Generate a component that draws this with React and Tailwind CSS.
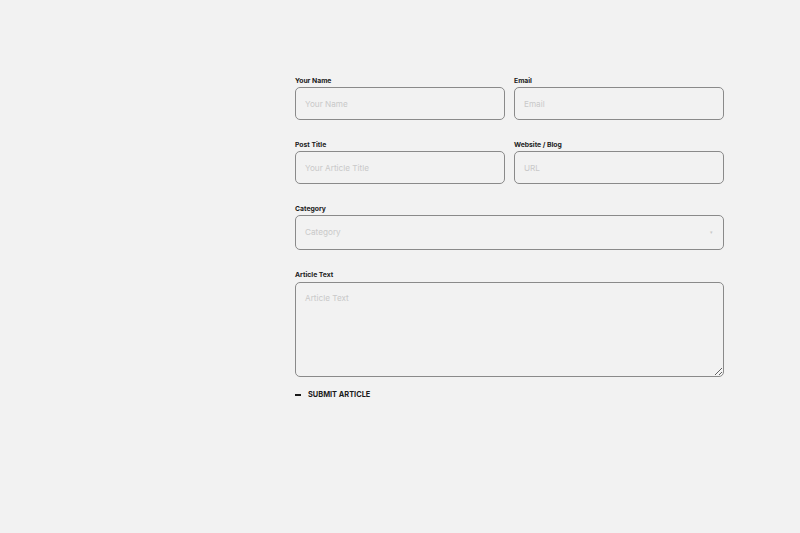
import React from "react";

const font = { fontFamily: "Inter, 'Liberation Sans', sans-serif" };

function Field({ label, placeholder, className = "" }) {
  return (
    <div className={"flex flex-col " + className}>
      <label className="text-[6.8px] leading-[11px] font-bold text-[#1a1a1a] mb-[1px]">{label}</label>
      <input
        placeholder={placeholder}
        className="h-[33px] w-full rounded-[5px] border-[1.5px] border-[#8a8a8a] bg-transparent px-[9px] text-[8.2px] text-[#333] placeholder:text-[#c9c9c9] outline-none"
      />
    </div>
  );
}

export default function App() {
  return (
    <div className="min-h-[533px] w-full bg-[#f2f2f2]" style={font}>
      <div className="ml-[295px] w-[429px] pt-[75px] flex flex-col">
        <div className="grid grid-cols-2 gap-x-[9px]">
          <Field label="Your Name" placeholder="Your Name" />
          <Field label="Email" placeholder="Email" />
        </div>
        <div className="grid grid-cols-2 gap-x-[9px] mt-[19px]">
          <Field label="Post Title" placeholder="Your Article Title" />
          <Field label="Website / Blog" placeholder="URL" />
        </div>
        <div className="flex flex-col mt-[19px]">
          <label className="text-[6.8px] leading-[11px] font-bold text-[#1a1a1a] mb-[1px]">Category</label>
          <div className="relative h-[35px] w-full rounded-[5px] border-[1.5px] border-[#8a8a8a] flex items-center px-[9px]">
            <span className="text-[8.2px] text-[#c9c9c9]">Category</span>
            <span className="absolute right-[10px] top-[13px] text-[5px] text-[#c9c9c9]">▾</span>
          </div>
        </div>
        <div className="flex flex-col mt-[19px]">
          <label className="text-[6.8px] leading-[11px] font-bold text-[#1a1a1a] mb-[2px]">Article Text</label>
          <textarea
            placeholder="Article Text"
            className="h-[95px] w-full rounded-[5px] border-[1.5px] border-[#8a8a8a] bg-transparent px-[9px] py-[9px] text-[8.2px] text-[#333] placeholder:text-[#c9c9c9] outline-none"
          />
        </div>
        <div className="flex items-center mt-[13px] gap-[7px] h-[10px]">
          <span className="block h-[1.5px] w-[6px] bg-[#1a1a1a]" />
          <span className="text-[7.4px] font-bold uppercase text-[#1a1a1a]">Submit Article</span>
        </div>
      </div>
    </div>
  );
}
